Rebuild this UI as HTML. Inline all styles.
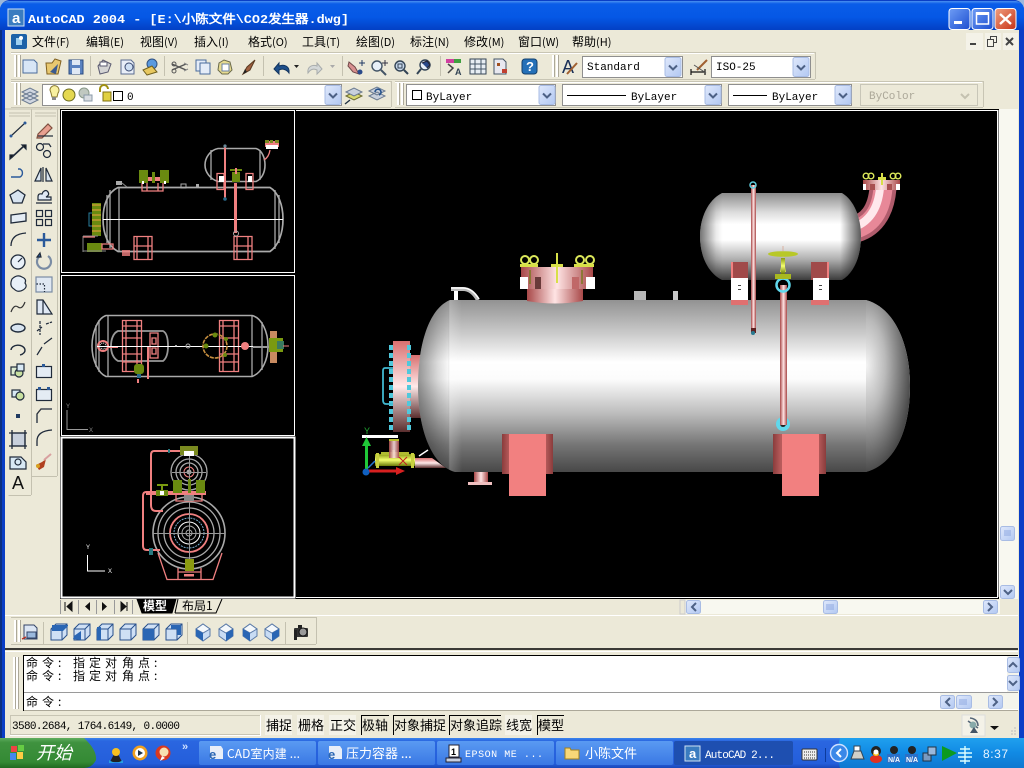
<!DOCTYPE html>
<html><head><meta charset="utf-8"><title>AutoCAD 2004</title>
<style>html,body{margin:0;padding:0;background:#000;overflow:hidden}svg{display:block}
text{font-family:"Liberation Sans","WenQuanYi Zen Hei","Noto Sans CJK SC",sans-serif;font-size:12px;fill:#000}
.m{font-family:"Liberation Mono","WenQuanYi Zen Hei",monospace;font-size:11px}
.c{font-family:"WenQuanYi Zen Hei","Noto Sans CJK SC",sans-serif}
.wf{fill:none;stroke:#aaa;stroke-width:1.300}.pk{fill:none;stroke:#f08080;stroke-width:1.300}
</style></head><body>
<svg width="1024" height="768" viewBox="0 0 1024 768" xmlns="http://www.w3.org/2000/svg">
<defs>
<linearGradient id="tb" x1="0" y1="0" x2="0" y2="1"><stop offset="0" stop-color="#4a90f0"/><stop offset=".1" stop-color="#0a5ce8"/><stop offset=".55" stop-color="#0558e6"/><stop offset="1" stop-color="#0340c4"/></linearGradient>
<linearGradient id="btn" x1="0" y1="0" x2="1" y2="1"><stop offset="0" stop-color="#6f9df5"/><stop offset="1" stop-color="#1c4ed0"/></linearGradient>
<linearGradient id="cls" x1="0" y1="0" x2="1" y2="1"><stop offset="0" stop-color="#f0a080"/><stop offset="1" stop-color="#c83218"/></linearGradient>
<linearGradient id="dd" x1="0" y1="0" x2="1" y2="1"><stop offset="0" stop-color="#dfe8fb"/><stop offset="1" stop-color="#b2c8f2"/></linearGradient>
<linearGradient id="ves" x1="0" y1="0" x2="0" y2="1"><stop offset="0" stop-color="#929292"/><stop offset=".2" stop-color="#cccccc"/><stop offset=".36" stop-color="#fff"/><stop offset=".46" stop-color="#fcfcfc"/><stop offset=".66" stop-color="#bcbcbc"/><stop offset=".84" stop-color="#767676"/><stop offset="1" stop-color="#484848"/></linearGradient>
<linearGradient id="ves2" x1="0" y1="0" x2="0" y2="1"><stop offset="0" stop-color="#8c8c8c"/><stop offset=".22" stop-color="#dcdcdc"/><stop offset=".36" stop-color="#fff"/><stop offset=".54" stop-color="#fff"/><stop offset=".76" stop-color="#b0b0b0"/><stop offset="1" stop-color="#3c3c3c"/></linearGradient>
<linearGradient id="capL" x1="0" y1="0" x2="1" y2="0"><stop offset="0" stop-color="#000" stop-opacity=".42"/><stop offset=".45" stop-color="#000" stop-opacity=".14"/><stop offset=".68" stop-color="#000" stop-opacity=".03"/><stop offset=".72" stop-color="#fff" stop-opacity=".2"/><stop offset="1" stop-color="#fff" stop-opacity="0"/></linearGradient>
<radialGradient id="capR" gradientUnits="userSpaceOnUse" cx="866" cy="365" r="1" gradientTransform="translate(866 365) scale(46 108) translate(-866 -365)"><stop offset="0" stop-color="#f4f4f4"/><stop offset=".42" stop-color="#bababa"/><stop offset=".62" stop-color="#929292"/><stop offset="1" stop-color="#484848"/></radialGradient>
<linearGradient id="capS" x1="0" y1="0" x2="1" y2="0"><stop offset="0" stop-color="#000" stop-opacity=".55"/><stop offset=".1" stop-color="#000" stop-opacity=".08"/><stop offset=".14" stop-color="#000" stop-opacity="0"/><stop offset=".87" stop-color="#000" stop-opacity="0"/><stop offset="1" stop-color="#000" stop-opacity=".65"/></linearGradient>
<linearGradient id="pkH" x1="0" y1="0" x2="1" y2="0"><stop offset="0" stop-color="#a84848"/><stop offset=".5" stop-color="#ffe4e4"/><stop offset="1" stop-color="#a84848"/></linearGradient>
<linearGradient id="pkV" x1="0" y1="0" x2="0" y2="1"><stop offset="0" stop-color="#d87070"/><stop offset=".5" stop-color="#ffeaea"/><stop offset="1" stop-color="#5a2e2e"/></linearGradient>
<linearGradient id="pkD" x1="0" y1="0" x2="1" y2="0"><stop offset="0" stop-color="#8a3c3c"/><stop offset=".15" stop-color="#b85c5c"/><stop offset=".85" stop-color="#b85c5c"/><stop offset="1" stop-color="#8a3c3c"/></linearGradient>
<linearGradient id="yl" x1="0" y1="0" x2="0" y2="1"><stop offset="0" stop-color="#8a9a10"/><stop offset=".5" stop-color="#f4ff70"/><stop offset="1" stop-color="#6a7a08"/></linearGradient>
<linearGradient id="task" x1="0" y1="0" x2="0" y2="1"><stop offset="0" stop-color="#3a84ec"/><stop offset=".1" stop-color="#2a66e0"/><stop offset=".85" stop-color="#245edb"/><stop offset="1" stop-color="#1a48b8"/></linearGradient>
<linearGradient id="start" x1="0" y1="0" x2="0" y2="1"><stop offset="0" stop-color="#5fae5f"/><stop offset=".15" stop-color="#3f923f"/><stop offset=".8" stop-color="#348a34"/><stop offset="1" stop-color="#206a20"/></linearGradient>
<linearGradient id="tray" x1="0" y1="0" x2="0" y2="1"><stop offset="0" stop-color="#20a0ee"/><stop offset=".5" stop-color="#118ae4"/><stop offset="1" stop-color="#0f78d0"/></linearGradient>
<linearGradient id="tk" x1="0" y1="0" x2="0" y2="1"><stop offset="0" stop-color="#5a9af2"/><stop offset="1" stop-color="#3a78e4"/></linearGradient>
<clipPath id="bv"><path d="M450 300H866C895 308 910 345 910 386C910 430 895 464 866 472H455C432 466 418 430 418 386C418 342 430 308 450 300Z"/></clipPath>
<clipPath id="sv"><path d="M722 193H842C854 200 861 218 861 236C861 256 854 273 842 280H722C708 273 700 256 700 236C700 218 708 200 722 193Z"/></clipPath>
<g id="arrow"><rect width="16" height="19" rx="2" fill="url(#dd)" stroke="#a8bce4"/><path d="M4 8l4 4 4-4" fill="none" stroke="#4d6185" stroke-width="2"/></g>
<g id="ring"><circle r="4" fill="none" stroke="#dce85a" stroke-width="2"/></g>
<g id="grip"><rect width="2" height="22" fill="#fff"/><rect x="2" width="1" height="22" fill="#aca899"/><rect x="4" width="2" height="22" fill="#fff"/><rect x="6" width="1" height="22" fill="#aca899"/></g>
<g id="cube"><path d="M-8 -3L-3 -8H8V3L3 8H-8Z" fill="#cfe0f5" stroke="#28508c"/><path d="M-8 -3H3V8M3 -3L8 -8" fill="none" stroke="#28508c"/></g>
<g id="dia"><path d="M0 -8L7 -3V4L0 9L-7 4V-3Z" fill="#c8dcf4" stroke="#5a7aa8"/><path d="M0 -8L7 -3L0 1L-7 -3Z" fill="#f4f8fc" stroke="#5a7aa8"/><path d="M0 1V9L-7 4V-3Z" fill="#2a66b4"/></g>
</defs>

<!-- window frame -->
<rect width="1024" height="768" fill="#0a3ec6"/>
<rect x="0" y="30" width="2" height="708" fill="#0b2f80"/>
<rect x="5" y="30" width="1014" height="708" fill="#ece9d8"/>
<path d="M0 30V8Q1 2 8 1H1016Q1023 2 1024 8V30Z" fill="url(#tb)"/>
<path d="M0 0h9Q2 1 0 8ZM1024 0h-9Q1022 1 1024 8Z" fill="#9cb8dc"/>
<rect x="8" y="9" width="16" height="17" fill="#3a7cc0" stroke="#cfe0f2"/>
<text x="12" y="23" style="font-size:15px;font-weight:bold;fill:#fff">a</text>
<text x="28" y="23" class="m" style="font-size:12px;font-weight:bold;fill:#fff" textLength="321" lengthAdjust="spacingAndGlyphs">AutoCAD 2004 - [E:\小陈文件\CO2发生器.dwg]</text>
<rect x="949" y="8.500" width="21" height="21" rx="3" fill="url(#btn)" stroke="#fff"/><rect x="954" y="21" width="8" height="3" fill="#fff"/>
<rect x="972" y="8.500" width="21" height="21" rx="3" fill="url(#btn)" stroke="#fff"/><rect x="976.500" y="13" width="12" height="11" fill="none" stroke="#fff" stroke-width="1.500"/><rect x="976" y="12" width="13" height="3" fill="#fff"/>
<rect x="995" y="8.500" width="21" height="21" rx="3" fill="url(#cls)" stroke="#fff"/><path d="M1000 14l11 10M1011 14l-11 10" stroke="#fff" stroke-width="2.400"/>

<!-- menu -->
<rect x="5" y="32" width="1014" height="20" fill="#ece9d8"/>
<rect x="11" y="34" width="16" height="15" rx="2" fill="#1c62a8"/><path d="M16 38h6v7h-6z" fill="#9ed0f0"/><circle cx="21" cy="38" r="2" fill="#fff"/>
<g style="font-size:12px">
<text x="32" y="46" class="c">文件<tspan style="font-size:11px">(F)</tspan></text>
<text x="86" y="46" class="c">编辑<tspan style="font-size:11px">(E)</tspan></text>
<text x="140" y="46" class="c">视图<tspan style="font-size:11px">(V)</tspan></text>
<text x="194" y="46" class="c">插入<tspan style="font-size:11px">(I)</tspan></text>
<text x="248" y="46" class="c">格式<tspan style="font-size:11px">(O)</tspan></text>
<text x="302" y="46" class="c">工具<tspan style="font-size:11px">(T)</tspan></text>
<text x="356" y="46" class="c">绘图<tspan style="font-size:11px">(D)</tspan></text>
<text x="410" y="46" class="c">标注<tspan style="font-size:11px">(N)</tspan></text>
<text x="464" y="46" class="c">修改<tspan style="font-size:11px">(M)</tspan></text>
<text x="518" y="46" class="c">窗口<tspan style="font-size:11px">(W)</tspan></text>
<text x="572" y="46" class="c">帮助<tspan style="font-size:11px">(H)</tspan></text>
</g>
<rect x="966" y="33" width="17" height="17" fill="#f4f2e8"/><rect x="985" y="33" width="16" height="17" fill="#f4f2e8"/><rect x="1003" y="33" width="15" height="17" fill="#f4f2e8"/>
<rect x="970" y="43" width="6" height="2" fill="#444"/>
<path d="M987.500 39.500h6v7h-6zM990.500 39.500v-3h6v6h-3" fill="none" stroke="#444"/>
<path d="M1006 38l7 7M1013 38l-7 7" stroke="#444" stroke-width="2"/>

<!-- toolbar 1 -->
<rect x="11" y="52" width="804" height="27" fill="#ece9d8"/>
<path d="M11 52.500H815M815.500 52V79M11 79.500H815" stroke="#c8c5b4" fill="none"/>
<path d="M11 53.500H814" stroke="#fff"/>
<use href="#grip" x="14" y="55"/>
<use href="#grip" x="552" y="55"/>
<path d="M90.500 56v20M164.500 56v20M263.500 56v20M342.500 56v20M440.500 56v20" stroke="#c4c1b0"/>
<!-- file icons -->
<path d="M23 60h11l3 3v10H23z" fill="#d8e6f6" stroke="#4a6c9c"/>
<path d="M46 63h6l3-4 6 2-3 13H47z" fill="#e8c870" stroke="#806020"/><path d="M50 72l8-8-2 10z" fill="#3a5a90"/>
<rect x="69" y="60" width="14" height="14" fill="#5a82c0" stroke="#2c4c80"/><rect x="72" y="60" width="8" height="5" fill="#dfe8f4"/><rect x="72" y="68" width="8" height="6" fill="#dfe8f4"/>
<path d="M98 66l5-6 8 4-3 8-8 2z" fill="#d4d4d4" stroke="#5a5a70"/><path d="M100 62h7v4h-7z" fill="#fff" stroke="#5a5a70"/>
<path d="M121 60h10l3 3v11h-13z" fill="#e8eef8" stroke="#5a6c90"/><circle cx="129" cy="67" r="4" fill="#cfe0f4" stroke="#3a4a70"/>
<circle cx="152" cy="64" r="5" fill="#5a9ae0" stroke="#305080"/><path d="M143 70l9-4 5 6-10 3z" fill="#e8c860" stroke="#706020"/>
<path d="M172 70l14-6M172 64l14 6" stroke="#555" stroke-width="1.400"/><circle cx="174" cy="64" r="2" fill="none" stroke="#555"/><circle cx="174" cy="71" r="2" fill="none" stroke="#555"/><path d="M184 63l4 2M184 71l4-2" stroke="#888"/>
<rect x="196" y="60" width="10" height="11" fill="#e4ecf8" stroke="#4a6c9c"/><rect x="200" y="63" width="10" height="11" fill="#e4ecf8" stroke="#4a6c9c"/>
<path d="M219 63l5-3 6 2 2 8-4 4h-6l-4-4z" fill="#e8dc90" stroke="#6a6a4a"/><path d="M222 64h7v7h-7z" fill="#fff" stroke="#6a80a0"/>
<path d="M243 74l4-7 8-7-5 10z" fill="#a06040" stroke="#5a3a20"/><path d="M243 74l4-2-2-3z" fill="#222"/>
<!-- undo/redo -->
<path d="M274 69l5-6v3c5-2 11 0 10 7-2-3-6-5-10-3v4z" fill="#1e4f8a" stroke="#12345e"/>
<path d="M294 65h5l-2.500 3z" fill="#222"/>
<path d="M322 69l-5-6v3c-5-2-10 1-9 7 2-3 5-5 9-3v4z" fill="#d4d8d8" stroke="#a8acac"/>
<path d="M330 65h5l-2.500 3z" fill="#aaa"/>
<path d="M349 62l6 5 4 7-6-2-5-6z" fill="#d89090" stroke="#704848"/><path d="M362 60v6M359 63h6" stroke="#223a66"/><circle cx="360" cy="72" r="2.500" fill="#2a4a8a"/>
<circle cx="377" cy="66" r="5" fill="#e8f0f8" stroke="#445566" stroke-width="1.400"/><path d="M381 70l5 5" stroke="#445566" stroke-width="2"/><path d="M385 60v6M382 63h6" stroke="#334"/>
<circle cx="400" cy="66" r="5" fill="#c8d8ec" stroke="#345" stroke-width="1.400"/><rect x="398" y="64" width="4" height="4" fill="none" stroke="#345"/><path d="M404 70l4 4" stroke="#345" stroke-width="2"/>
<circle cx="425" cy="65" r="5" fill="#e8f0f8" stroke="#345" stroke-width="1.400"/><path d="M421 69l-4 5" stroke="#345" stroke-width="2"/><path d="M422 63l5-2 3 4-3 3" fill="#2a4a8a" stroke="#223"/>
<rect x="446" y="59" width="8" height="4" fill="#d040a0"/><rect x="454" y="59" width="7" height="4" fill="#40a040"/><path d="M448 64l5 4-5 5" fill="none" stroke="#444" stroke-width="1.500"/><text x="455" y="75" style="font-size:9px;font-weight:bold;fill:#345">A</text>
<rect x="470" y="59" width="16" height="15" fill="#e8eef4" stroke="#345"/><path d="M475 59v15M481 59v15M470 64h16M470 69h16" stroke="#456"/>
<path d="M494 59h9l3 3v12h-12z" fill="#e8e8f0" stroke="#456"/><rect x="497" y="63" width="3" height="3" fill="#a05020"/><rect x="502" y="69" width="5" height="4" fill="#c04030"/>
<rect x="522" y="59" width="15" height="15" rx="3" fill="#2470b8" stroke="#14406c"/><text x="526" y="71" style="font-size:13px;font-weight:bold;fill:#fff">?</text>
<text x="562" y="73" style="font-size:18px;fill:#1a3058">A</text><path d="M567 74l10-11" stroke="#a06030" stroke-width="2"/>
<rect x="582.500" y="56.500" width="100" height="21" fill="#fff" stroke="#8f8f8f"/><text x="587" y="70" class="m">Standard</text><use href="#arrow" x="665" y="57.500"/>
<path d="M691 72h14M691 69v6M705 69v6" stroke="#111" stroke-width="1.200"/><path d="M697 70l10-10" stroke="#a06030" stroke-width="2"/><path d="M694 65l12 8" stroke="#555"/>
<rect x="711.500" y="56.500" width="99" height="21" fill="#fff" stroke="#8f8f8f"/><text x="716" y="70" class="m">ISO-25</text><use href="#arrow" x="793" y="57.500"/>

<!-- toolbar 2 -->
<path d="M11 81.500H391M391.500 81V107M11 107.500H391" stroke="#c8c5b4" fill="none"/><path d="M11 82.500H390" stroke="#fff"/>
<path d="M395 81.500H983M983.500 81V107M395 107.500H983" stroke="#c8c5b4" fill="none"/><path d="M395 82.500H982" stroke="#fff"/>
<use href="#grip" x="14" y="83"/><use href="#grip" x="397" y="83"/>
<path d="M22 96l8-4 8 4-8 4zM22 92l8-4 8 4-8 4zM22 100l8-4 8 4-8 4z" fill="#d0d6e0" stroke="#6a7a90"/>
<rect x="42.500" y="84.500" width="299" height="21" fill="#fff" stroke="#8f8f8f"/>
<path d="M50 90a4.500 4.500 0 1 1 8 3l-1 4h-5l-1-4z" fill="#f8f0a0" stroke="#8a7a30"/><rect x="52" y="97" width="4" height="3" fill="#888"/>
<circle cx="69" cy="95" r="6" fill="#e4d850" stroke="#6a6a20"/>
<circle cx="84" cy="93" r="5" fill="#c0c8c0" stroke="#8a9a8a"/><rect x="84" y="95" width="8" height="6" fill="#d8dce0" stroke="#8a9aa8"/>
<path d="M100 92v-3a4 4 0 0 1 8 0" fill="none" stroke="#a09010" stroke-width="2"/><rect x="103" y="92" width="8" height="9" fill="#e0d040" stroke="#807010"/>
<rect x="113.500" y="91.500" width="9" height="9" fill="#fff" stroke="#000"/>
<text x="127" y="100" class="m">0</text>
<use href="#arrow" x="325" y="85.500"/>
<path d="M346 96l8-4 8 4-8 4z" fill="#d8d870" stroke="#6a6a30"/><path d="M346 92l8-4 8 4-8 4z" fill="#c8d0dc" stroke="#6a7a90"/><path d="M345 104l5-4" stroke="#234" stroke-width="1.400"/>
<path d="M369 96l8-4 8 4-8 4zM369 91l8-4 8 4-8 4z" fill="#c8d0dc" stroke="#6a7a90"/><path d="M375 92a3 3 0 1 1 4 3" fill="none" stroke="#23508a" stroke-width="1.600"/>
<rect x="406.500" y="84.500" width="149" height="21" fill="#fff" stroke="#8f8f8f"/><rect x="412.500" y="90.500" width="9" height="9" fill="#fff" stroke="#000"/><text x="426" y="100" class="m">ByLayer</text><use href="#arrow" x="539" y="85.500"/>
<rect x="562.500" y="84.500" width="159" height="21" fill="#fff" stroke="#8f8f8f"/><path d="M567 95.500H626" stroke="#000"/><text x="631" y="100" class="m">ByLayer</text><use href="#arrow" x="705" y="85.500"/>
<rect x="728.500" y="84.500" width="123" height="21" fill="#fff" stroke="#8f8f8f"/><path d="M733 95.500H767" stroke="#000"/><text x="772" y="100" class="m">ByLayer</text><use href="#arrow" x="835" y="85.500"/>
<rect x="860.500" y="84.500" width="117" height="21" fill="#ece9d8" stroke="#c8c6b8"/><text x="869" y="99" class="m" style="fill:#aca899">ByColor</text><path d="M961 94l4 4 4-4" fill="none" stroke="#c4c1b0" stroke-width="2"/>

<!-- left toolbars -->
<path d="M5 109H60" stroke="#c4c1b0"/>
<path d="M31.500 109V495M8.500 495.500H31" stroke="#c4c1b0" fill="none"/>
<path d="M57.500 109V476M32 476.500H57" stroke="#c4c1b0" fill="none"/>
<path d="M9 113h21M9 116h21M35 113h21M35 116h21" stroke="#c4c1b0"/>
<g fill="none" stroke="#1f2a3a" stroke-width="1.200">
<path d="M11 136L25 123"/><circle cx="11" cy="136" r="1.500" fill="#2b5a9a" stroke="none"/><circle cx="25" cy="123" r="1.500" fill="#2b5a9a" stroke="none"/>
<path d="M11 158L25 145" stroke-width="1.600"/><path d="M22 145h4v4zM10 159v-4h4z" fill="#111"/>
<path d="M11 177h9a4.500 4.500 0 0 0 0-8h-2" stroke="#2b5a9a" stroke-width="1.400"/>
<path d="M18 190l7 5-3 8h-9l-3-8z" fill="#d8e4f0" stroke-width="1.300"/>
<path d="M11 215l15-2v8l-15 2z" fill="#e4ecf4" stroke-width="1.300"/>
<path d="M11 246q0-12 15-13" stroke-width="1.300"/>
<circle cx="18" cy="262" r="7" fill="#e8f0f8" stroke-width="1.300"/><path d="M18 262l4-4"/>
<path d="M12 279q5-5 10-2 5 2 3 6 3 4-2 7-5 3-9-1-5-3-2-10z" fill="#e8f0f8"/>
<path d="M11 312q3-8 7-5t7-5" stroke="#333"/>
<ellipse cx="18" cy="328" rx="7" ry="4" fill="#d8e4f0" stroke-width="1.400"/>
<path d="M11 350a7 5 0 1 1 9 5" stroke-width="1.400"/>
<rect x="11" y="367" width="9" height="8" fill="#dcebd0"/><circle cx="19" cy="373" r="4" fill="#c8e0a0"/><rect x="17" y="364" width="7" height="7" fill="#d8e8f4"/>
<rect x="12" y="390" width="8" height="7" fill="#d8e8f4"/><circle cx="20" cy="396" r="4" fill="#c8e0a0"/>
<rect x="12" y="433" width="13" height="13" fill="#c8d0dc"/><path d="M9 433h18M9 446h18M12 430v19M25 430v19" stroke-width="1.300"/>
<path d="M10 457h11l5 5v7H10z" fill="#d8e8f4" stroke-width="1.200"/><circle cx="18" cy="462" r="3"/>
</g>
<rect x="16" y="414" width="4" height="4" fill="#203a60"/>
<text x="12" y="489" style="font-size:18px;fill:#111">A</text>
<!-- col 2 -->
<g fill="none" stroke="#1f2a3a" stroke-width="1.200">
<path d="M38 134l10-10 4 4-10 10-5 0z" fill="#e8a090" stroke="#805040"/><path d="M38 136h15" />
<circle cx="40" cy="147" r="3.500"/><circle cx="47" cy="154" r="3.500"/><path d="M43 144h6l2 3"/>
<path d="M43 167v15M41 181h-6l6-13zM46 181h6l-6-13z" fill="#d8e4f0"/>
<path d="M36 203h16M38 200v-3q0-4 4-3l1-2q3-3 5 0t-2 5h5v3z" fill="#dfe8f4"/>
<rect x="36.500" y="210.500" width="6" height="6" /><rect x="45.500" y="210.500" width="6" height="6"/><rect x="36.500" y="219.500" width="6" height="6"/><rect x="45.500" y="219.500" width="6" height="6"/>
<path d="M37 240h14M44 233v14" stroke="#2b5a9a" stroke-width="2.400"/>
<path d="M48 256a7 7 0 1 1-8 0" stroke="#7a8ca4" stroke-width="2.200"/><path d="M40 253l1 4-4 0z" fill="#2b5a9a"/>
<rect x="36" y="277" width="16" height="15" fill="#e0e8f2" stroke="#7a8ca4"/><path d="M36.500 284h8v8" stroke-dasharray="1.500 1.500"/>
<path d="M37 300h6l9 14H37z" fill="#dfe8f4"/><path d="M43 300v14"/>
<path d="M37 331l5-4M46 324l6-2M40 321v14" stroke-dasharray="3 1"/>
<path d="M37 355l5-8M44 344l8-6"/>
<rect x="36.500" y="366.500" width="15" height="11" fill="#e4ecf4"/><rect x="42" y="364" width="3" height="3" fill="#2b5a9a" stroke="none"/>
<rect x="36.500" y="389.500" width="15" height="11" fill="#e4ecf4"/><rect x="38" y="387" width="3" height="3" fill="#2b5a9a" stroke="none"/><rect x="47" y="387" width="3" height="3" fill="#2b5a9a" stroke="none"/>
<path d="M37 423v-9l4-5h11" stroke-width="1.300"/><path d="M41 409l-4 5" stroke="#444" stroke-dasharray="1 1"/>
<path d="M37 446v-5q0-10 15-11" stroke-width="1.300"/>
</g>
<path d="M36 465l6-3 4-3-2 8-5 3z" fill="#b04020"/><path d="M44 460l7-6" stroke="#d8a0a0" stroke-width="2"/><circle cx="38" cy="466" r="2" fill="#d8a020"/>

<!-- drawing area -->
<rect x="60" y="109" width="940" height="490" fill="#000"/>
<path d="M61.500 110.500H294.500V272.500H61.500Z" fill="none" stroke="#fff"/>
<path d="M61.500 275.500H294.500V435.500H61.500Z" fill="none" stroke="#fff"/>
<rect x="61.500" y="437.500" width="233" height="160" fill="none" stroke="#fff" stroke-width="2"/>
<path d="M296 110.500H997.500V597.500H296" fill="none" stroke="#fff"/>

<!-- view 1 -->
<g>
<path class="wf" d="M118 187.500H270C278 192 283 205 283 219C283 234 278 246 270 251.500H118C108 246 103 234 103 219C103 205 108 192 118 187.500Z" style="stroke-width:1.700"/>
<path class="wf" d="M119 188V251M275 190V249M107 195V243M110 190V248M279 195V243"/>
<path d="M103 219.500H283" stroke="#fff"/>
<path class="wf" d="M218 148.500H256C262 150 265 158 265 165C265 172 262 179 256 181.500H218C210 179 205 172 205 165C205 158 210 150 218 148.500Z" style="stroke-width:1.600"/>
<path class="wf" d="M211 150V180M260 150V180"/>
<path class="pk" d="M134 236.500h18v23h-18zM137 236v23M148 236v23M134 246h18"/>
<path class="pk" d="M234 236.500h18v23h-18zM237 236v23M248 236v23M234 246h18"/>
<path class="pk" d="M142 180v11h21v-11M147 191v-8M158 191v-8"/>
<rect x="139" y="177" width="28" height="4" fill="#f08080"/>
<rect x="139" y="170" width="9" height="13" fill="#6a8a10"/><rect x="160" y="170" width="9" height="13" fill="#6a8a10"/><rect x="152" y="172" width="3" height="11" fill="#6a8a10"/>
<rect x="142" y="181" width="2" height="3" fill="#fff"/><rect x="164" y="181" width="2" height="3" fill="#fff"/>
<rect x="92" y="203" width="9" height="33" fill="#6a8a10"/><path d="M92 205h9M92 210h9M92 215h9M92 220h9M92 226h9M92 231h9" stroke="#f0a040"/>
<path d="M92 213h-3v13h3" fill="none" stroke="#2a80a0"/>
<rect x="234" y="183" width="3" height="50" fill="#f08080"/><rect x="224" y="146" width="2" height="52" fill="#f08080"/>
<circle cx="225" cy="146" r="1.600" fill="#6a8a9a"/><circle cx="225" cy="199" r="1.800" fill="#2a6a8a"/><circle cx="236" cy="233.500" r="2.500" fill="none" stroke="#aaa"/>
<rect x="232" y="172" width="8" height="10" fill="#6a8a10"/><rect x="230" y="169" width="12" height="2" fill="#6a8a10"/><rect x="235" y="168" width="2" height="6" fill="#f08080"/>
<path class="pk" d="M217 173.500h7v16h-7zM246 173.500h7v16h-7z"/><rect x="219" y="176" width="5" height="6" fill="#fff"/><rect x="248" y="176" width="4" height="6" fill="#fff"/>
<rect x="265" y="141" width="14" height="6" fill="#f08080"/><rect x="266" y="145" width="12" height="4" fill="#fff"/><rect x="265" y="140" width="4" height="3" fill="#7a8a20"/><rect x="270" y="140" width="3" height="3" fill="#7a8a20"/><rect x="275" y="140" width="4" height="3" fill="#7a8a20"/>
<path class="pk" d="M270 150q-1 7-6 10"/>
<rect x="116" y="181" width="6" height="4" fill="#aaa"/><path d="M122 183l5 4" stroke="#888"/><rect x="181" y="184" width="5" height="4" fill="none" stroke="#aaa"/><rect x="196" y="184" width="3" height="4" fill="#aaa"/>
<rect x="87" y="243" width="15" height="9" fill="#6a8a10"/><path d="M83 236h15M83 236v16M83 251h23" stroke="#888" fill="none"/><path class="pk" d="M83 237h12M102 244h11v5h-11z"/>
<rect x="122" y="250" width="8" height="6" fill="#f08080" opacity=".8"/>
</g>

<!-- view 2 -->
<g>
<path class="wf" style="stroke-width:1.600" d="M106 315.500H252C262 318 268 332 268 346C268 360 262 373 252 376.500H106C98 373 92 360 92 346C92 332 98 318 106 315.500Z"/>
<path class="wf" d="M108 316V376M252 316V376M96 325V367M99 320V372M262 322V370"/>
<path class="wf" d="M118 331H163C167 333 168 340 168 346C168 352 167 358 163 361H118C113 358 111 352 111 346C111 340 113 333 118 331Z" style="stroke:#999;stroke-width:1.800"/>
<path class="pk" d="M122.500 320.500h19v51h-19zM126 320v51M137 320v51M122 326h19M122 338h19M122 354h19M122 362h19"/>
<path class="pk" d="M219.500 320.500h19v51h-19zM223 320v51M234 320v51M219 326h19M219 338h19M219 354h19M219 362h19"/>
<path class="pk" d="M150 333h8v25h-8zM152 338h4v6h-4zM152 348h4v6h-4z"/><path d="M148 346v33" stroke="#f08080" stroke-width="2"/>
<circle cx="103" cy="346" r="5" fill="none" stroke="#f08080" stroke-width="2"/><circle cx="103" cy="346" r="3" fill="none" stroke="#fff" stroke-dasharray="1 1"/><path d="M108 347h10" stroke="#f08080" stroke-width="2"/>
<path d="M97 346.500H270" stroke="#fff"/>
<circle cx="188" cy="346" r="2" fill="none" stroke="#aaa"/><circle cx="176" cy="346" r="1" fill="#ddd"/>
<circle cx="215" cy="346" r="12" fill="none" stroke="#c89040" stroke-width="1.600" stroke-dasharray="4 1"/><circle cx="206" cy="346" r="2.500" fill="#6a8a10"/><circle cx="215" cy="335" r="2.500" fill="#6a8a10"/><circle cx="226" cy="339" r="2" fill="#6a8a10"/><circle cx="225" cy="355" r="2" fill="#6a8a10"/>
<circle cx="245" cy="346" r="4" fill="#f08080"/><path d="M253 347h18" stroke="#999" stroke-width="2"/>
<rect x="270" y="331" width="7" height="32" fill="#c88a60"/><rect x="269" y="338" width="14" height="14" fill="#7a9a10"/><rect x="277" y="341" width="7" height="8" fill="#3a7a60"/><path d="M283 346h6" stroke="#f08080"/>
<rect x="134" y="364" width="10" height="10" rx="3" fill="#6a8a10"/><rect x="137" y="374" width="4" height="4" fill="#2a6a8a"/><path d="M138 379v4" stroke="#f08080" stroke-width="2"/>
<path d="M67 410V429.500H88" stroke="#999" fill="none"/><text x="66" y="408" style="font-size:6px;fill:#888">Y</text><text x="89" y="432" style="font-size:6px;fill:#888">X</text>
</g>

<!-- view 3 -->
<g>
<circle cx="189" cy="533" r="36" class="wf" style="stroke-width:1.600"/><circle cx="189" cy="533" r="31" class="wf"/><circle cx="189" cy="533" r="25" class="wf"/>
<circle cx="189" cy="533" r="19" fill="none" stroke="#f08080" stroke-width="1.800"/><circle cx="189" cy="533" r="15" fill="none" stroke="#7ac" stroke-dasharray="2 1"/><circle cx="189" cy="533" r="11" fill="none" stroke="#fff"/><circle cx="189" cy="533" r="7" fill="none" stroke="#aaa"/><circle cx="189" cy="533" r="3" fill="none" stroke="#aaa"/>
<path d="M153 533.500H225M189.500 497V569" stroke="#999"/>
<circle cx="189" cy="472" r="18" class="wf"/><circle cx="189" cy="472" r="13" class="wf"/><circle cx="189" cy="472" r="9" class="wf"/><circle cx="189" cy="472" r="5" fill="none" stroke="#f08080"/><circle cx="189" cy="472" r="2.500" fill="#aaa"/>
<path d="M172 472.500H206M189.500 454V490" stroke="#999"/>
<path class="pk" d="M158 553L167 579.500H213L222 553M178 568v11M201 568v11M178 572h23"/>
<rect x="184" y="574" width="10" height="2.500" fill="#f08080"/>
<rect x="185" y="559" width="9" height="12" fill="#8a9a10"/>
<path d="M187 451H154Q151 451 151 455V505Q151 511 156 511H163" fill="none" stroke="#f08080" stroke-width="2"/>
<path d="M155 492H146Q143 492 143 496V546Q143 550 147 550H160" fill="none" stroke="#f08080" stroke-width="2"/>
<rect x="149" y="548" width="4" height="7" fill="#2a7a80"/><rect x="168" y="449" width="2" height="4" fill="#2a7a80"/>
<rect x="180" y="446" width="18" height="9" fill="#7a8a20"/><rect x="184" y="451" width="10" height="5" fill="#fff"/>
<rect x="146" y="491" width="60" height="4" fill="#f08080"/>
<rect x="173" y="480" width="9" height="13" fill="#6a8a10"/><rect x="196" y="480" width="9" height="13" fill="#6a8a10"/><rect x="188" y="479" width="3" height="14" fill="#6a8a10"/>
<path d="M157 485h11M162 485v7" stroke="#7a9a10" stroke-width="2"/><rect x="156" y="490" width="12" height="6" fill="#6a8a10"/><rect x="160" y="491" width="4" height="4" fill="#fff"/>
<path class="pk" d="M176 495v6h26v-6"/><rect x="184" y="495" width="10" height="6" fill="#888"/>
<path d="M87.500 555V571H105" stroke="#fff" fill="none"/><text x="86" y="549" style="font-size:6px;fill:#fff">Y</text><text x="108" y="573" style="font-size:6px;fill:#fff">X</text>
</g>

<!-- big model -->
<g>
<!-- U pipe -->
<rect x="454" y="289" width="4" height="12" fill="#fff"/>
<path d="M451 289H463Q472 289 478 300" fill="none" stroke="#bbb" stroke-width="4"/><path d="M451 288H463Q472 288 479 299" fill="none" stroke="#fff" stroke-width="1.500"/>
<!-- small top fittings -->
<rect x="634" y="291" width="12" height="9" fill="#b8b8b8"/><rect x="673" y="291" width="5" height="9" fill="#c8c8c8"/>
<!-- left neck + flange -->
<rect x="409" y="355" width="12" height="63" fill="url(#pkV)"/>
<rect x="393" y="341" width="17" height="91" fill="url(#pkV)"/>
<g fill="#50c8dc"><rect x="389" y="345" width="4" height="5"/><rect x="389" y="353" width="4" height="5"/><rect x="389" y="361" width="4" height="5"/><rect x="389" y="369" width="4" height="5"/><rect x="389" y="377" width="4" height="5"/><rect x="389" y="385" width="4" height="5"/><rect x="389" y="393" width="4" height="5"/><rect x="389" y="401" width="4" height="5"/><rect x="389" y="409" width="4" height="5"/><rect x="389" y="417" width="4" height="5"/><rect x="389" y="425" width="4" height="5"/>
<rect x="407" y="345" width="4" height="5"/><rect x="407" y="353" width="4" height="5"/><rect x="407" y="361" width="4" height="5"/><rect x="407" y="369" width="4" height="5"/><rect x="407" y="377" width="4" height="5"/><rect x="407" y="385" width="4" height="5"/><rect x="407" y="393" width="4" height="5"/><rect x="407" y="401" width="4" height="5"/><rect x="407" y="409" width="4" height="5"/><rect x="407" y="417" width="4" height="5"/><rect x="407" y="425" width="4" height="5"/></g>
<path d="M393 368H385Q383 368 383 371V400Q383 404 386 404H393" fill="none" stroke="#40b8d0" stroke-width="1.800"/>
<!-- vessel -->
<g clip-path="url(#bv)">
<rect x="418" y="300" width="492" height="172" fill="url(#ves)"/>
<rect x="418" y="300" width="44" height="172" fill="url(#capL)"/>
<rect x="866" y="300" width="44" height="172" fill="url(#capR)"/>
</g>
<!-- top nozzle -->
<path d="M527 289H583V301Q555 306 527 301Z" fill="url(#pkH)"/>
<rect x="521" y="267" width="72" height="10" fill="url(#pkH)"/>
<rect x="521" y="277" width="72" height="12" fill="url(#pkH)"/>
<rect x="520" y="277" width="8" height="12" fill="#fff"/><rect x="535" y="277" width="6" height="12" fill="#6a3a3a"/><rect x="572" y="277" width="7" height="12" fill="#c06868"/><rect x="586" y="277" width="9" height="12" fill="#fff"/>
<use href="#ring" x="525" y="260"/><use href="#ring" x="534" y="260"/><use href="#ring" x="580" y="260"/><use href="#ring" x="590" y="260"/>
<g fill="#d8e048"><rect x="520" y="264" width="18" height="3"/><rect x="574" y="264" width="20" height="3"/><rect x="551" y="264" width="12" height="3"/><rect x="556" y="253" width="2" height="30"/></g>
<path d="M530 270v14M582 270v14" stroke="#7a7a20" stroke-width="1.500"/>
<!-- saddles -->
<rect x="502" y="434" width="51" height="40" fill="url(#pkD)"/>
<rect x="509" y="434" width="37" height="62" fill="#f28080"/>
<rect x="773" y="434" width="53" height="40" fill="url(#pkD)"/>
<rect x="782" y="434" width="37" height="62" fill="#f28080"/>
<!-- bottom nozzle -->
<rect x="474" y="472" width="14" height="10" fill="url(#pkH)"/><rect x="468" y="482" width="24" height="3" fill="#f0c0c0"/>
<!-- bottom left pipe -->
<path d="M415 458H432L446 468H415Z" fill="url(#pkV)"/>
<path d="M419 456l9-6" stroke="#fff" stroke-width="1.500"/>
<rect x="362" y="435" width="36" height="3" fill="#fff"/>
<rect x="392" y="450" width="3" height="8" fill="#8a9a10"/>
<rect x="375" y="454" width="40" height="12" fill="url(#yl)"/>
<rect x="381" y="452" width="28" height="3" fill="#b0bc30"/>
<rect x="376" y="453" width="3" height="15" fill="#c8d040"/><rect x="411" y="453" width="3" height="15" fill="#c8d040"/>
<rect x="389" y="440" width="10" height="18" fill="url(#pkH)" opacity=".9"/><rect x="389" y="439" width="10" height="2" fill="#b8c030"/>
<!-- UCS -->
<path d="M366.500 470V442" stroke="#20c838" stroke-width="3"/><path d="M362 446l4.500-9 4.500 9z" fill="#20c838"/>
<path d="M367 471H398" stroke="#d82020" stroke-width="3"/><path d="M396 467l9 4-9 4z" fill="#d82020"/>
<path d="M368 468l7-7" stroke="#2878d0" stroke-width="1.500"/><circle cx="366" cy="472" r="3.500" fill="#1060c0"/>
<text x="364" y="434" style="font-size:9px;fill:#20a830">Y</text>
<path d="M399 457l8 8M407 457l-8 8" stroke="#c02020"/>
<!-- elbow (behind the vessel) -->
<path d="M852 230Q880 224 883 188" fill="none" stroke="#b05c6c" stroke-width="27"/>
<path d="M852 230Q880 224 883 188" fill="none" stroke="#e88898" stroke-width="19"/>
<path d="M852 228Q877 220 880 188" fill="none" stroke="#ffe8ec" stroke-width="8"/>
<!-- small vessel -->
<g clip-path="url(#sv)"><rect x="700" y="193" width="161" height="87" fill="url(#ves2)"/><rect x="700" y="193" width="161" height="87" fill="url(#capS)"/></g>
<!-- elbow flange -->
<rect x="863" y="180" width="37" height="10" fill="url(#pkH)"/><rect x="863" y="184" width="3" height="6" fill="#fff"/><rect x="870" y="184" width="5" height="6" fill="#a85050"/><rect x="887" y="184" width="5" height="6" fill="#a85050"/><rect x="896" y="184" width="4" height="6" fill="#fff"/>
<use href="#ring" transform="translate(866 176) scale(.7)"/><use href="#ring" transform="translate(871 176) scale(.7)"/><use href="#ring" transform="translate(893 176) scale(.7)"/><use href="#ring" transform="translate(898 176) scale(.7)"/>
<rect x="881" y="173" width="2" height="12" fill="#d8e048"/><rect x="878" y="177" width="8" height="3" fill="#d8e048"/>
<!-- supports -->
<rect x="731" y="262" width="17" height="18" fill="#a04a4a"/><rect x="731" y="262" width="2" height="43" fill="#f08080"/><rect x="731" y="278" width="17" height="22" fill="#fff"/><rect x="731" y="300" width="17" height="5" fill="#e07070"/><rect x="738" y="285" width="3" height="1" fill="#444"/><rect x="738" y="289" width="3" height="1" fill="#444"/>
<rect x="811" y="262" width="18" height="18" fill="#a04a4a"/><rect x="827" y="262" width="2" height="43" fill="#f08080"/><rect x="813" y="278" width="16" height="22" fill="#fff"/><rect x="811" y="300" width="18" height="5" fill="#e07070"/><rect x="819" y="285" width="3" height="1" fill="#444"/><rect x="819" y="289" width="3" height="1" fill="#444"/>
<!-- thin pipe -->
<rect x="751" y="185" width="5" height="148" fill="url(#pkH)"/><rect x="751" y="328" width="5" height="5" fill="#602020"/>
<circle cx="753" cy="185" r="3" fill="none" stroke="#60d0e0" stroke-width="1.500"/><circle cx="753" cy="333" r="2" fill="#2a7a90"/>
<!-- valve pipe -->
<rect x="780" y="285" width="7" height="142" fill="url(#pkH)"/>
<circle cx="783" cy="285" r="6.500" fill="none" stroke="#60d8ec" stroke-width="2.500"/>
<circle cx="783" cy="424" r="7" fill="#60d8ec"/><circle cx="783" cy="424" r="3" fill="#222"/><rect x="780" y="410" width="7" height="15" fill="url(#pkH)"/>
<ellipse cx="783" cy="254" rx="15" ry="2.800" fill="#b8c828"/>
<path d="M783 256L786 272H780Z" fill="#d8e048"/><rect x="781" y="258" width="4" height="16" fill="url(#yl)"/>
<rect x="775" y="274" width="16" height="5" fill="#a8b820"/><path d="M783 246v5" stroke="#d8b0a0"/>
</g>

<!-- tab bar -->
<rect x="60" y="599" width="77" height="15" fill="#ece9d8"/>
<path d="M60.500 600v14M78.500 600v14M96.500 600v14M114.500 600v14M132.500 600v14" stroke="#999"/>
<path d="M65 602v9M72 602l-5 4.500 5 4.500z" fill="#111" stroke="#111"/><path d="M90 602l-5 4.500 5 4.500z" fill="#111"/><path d="M102 602l5 4.500-5 4.500z" fill="#111"/><path d="M121 602l5 4.500-5 4.500zM127 602v9" fill="#111" stroke="#111"/>
<path d="M137 599l5 14h30l4-14z" fill="#000" stroke="#000"/><text x="143" y="610" class="c" style="fill:#fff;font-weight:bold">模型</text>
<path d="M175 613h41l6-14" fill="none" stroke="#000"/><path d="M175 613l3-14" fill="none" stroke="#000"/><text x="182" y="610" class="c">布局1</text>
<rect x="680" y="600" width="320" height="14" fill="#f8f8f0"/>
<rect x="680" y="600" width="5" height="14" fill="#ece9d8" stroke="#ccc"/>
<rect x="686.500" y="600.500" width="14" height="13" rx="2" fill="url(#dd)" stroke="#a8bce4"/><path d="M696 603l-4 4 4 4" fill="none" stroke="#4d6185" stroke-width="2"/>
<rect x="823.500" y="600.500" width="14" height="13" rx="2" fill="url(#dd)" stroke="#a8bce4"/><path d="M827 604v6M829 604v6M831 604v6M833 604v6" stroke="#8ea8e0"/>
<rect x="983.500" y="600.500" width="14" height="13" rx="2" fill="url(#dd)" stroke="#a8bce4"/><path d="M988 603l4 4-4 4" fill="none" stroke="#4d6185" stroke-width="2"/>
<!-- vertical scrollbar -->
<rect x="999" y="109" width="19" height="490" fill="#f8f8f0"/>
<path d="M999 110V597" stroke="#fff"/>
<rect x="1000.500" y="526.500" width="14" height="14" rx="2" fill="url(#dd)" stroke="#a8bce4"/><path d="M1004 531h7M1004 533h7M1004 535h7" stroke="#8ea8e0"/>
<rect x="1000.500" y="585.500" width="14" height="13" rx="2" fill="url(#dd)" stroke="#a8bce4"/><path d="M1004 590l4 4 4-4" fill="none" stroke="#4d6185" stroke-width="2"/>
<path d="M5 615.500H1018" stroke="#fff"/>

<!-- view toolbar -->
<path d="M11 617.500H316M316.500 617V644M11 644.500H316" fill="none" stroke="#c4c1b0"/>
<use href="#grip" x="14" y="620"/>
<path d="M24 625h10l3 3v11H24z" fill="#dce6f4" stroke="#346"/><rect x="27" y="632" width="9" height="6" fill="#9ab8dc" stroke="#346"/><path d="M22 639l4-2" stroke="#c03020" stroke-width="1.300"/>
<path d="M43.500 622v22M187.500 622v22M285.500 622v22" stroke="#c4c1b0"/>
<g stroke="#28508c"><use href="#cube" x="59" y="632"/><use href="#cube" x="82" y="632"/><use href="#cube" x="105" y="632"/><use href="#cube" x="128" y="632"/></g>
<path d="M52 625h11l5-0v1l-5 5H52z" fill="#2a66b4"/>
<path d="M74 636l7-5v9l-8-1z" fill="#2a66b4"/><path d="M97 627h4v13h-4z" fill="#2a66b4"/><use href="#cube" x="151" y="632"/><use href="#cube" x="174" y="632"/><rect x="143" y="629" width="11" height="11" fill="#2a66b4"/><path d="M171 625h10v10h-4v-6h-6z" fill="#2a66b4"/>
<use href="#dia" x="203" y="632"/><use href="#dia" transform="translate(226 632) scale(-1 1)"/><use href="#dia" x="250" y="632"/><use href="#dia" transform="translate(272 632) scale(-1 1)"/>
<rect x="294" y="628" width="14" height="9" rx="1" fill="#333"/><circle cx="303" cy="632" r="4" fill="#999" stroke="#111"/><rect x="294" y="630" width="3" height="10" fill="#222"/><rect x="298" y="625" width="4" height="3" fill="#222"/>

<!-- command window -->
<path d="M5 649H1018" stroke="#000" stroke-width="1.500"/><path d="M5 651.500H1018" stroke="#fff"/>
<rect x="13" y="657" width="7" height="52" fill="#ece9d8"/><path d="M14 657v52M17 657v52" stroke="#fff" stroke-width="2"/><path d="M15.500 657v52M18.500 657v52" stroke="#aca899"/>
<rect x="23.500" y="655.500" width="995" height="55" fill="#fff"/>
<path d="M23 655.500H1018M23.500 655V711" stroke="#000"/>
<path d="M24 692.500H1018" stroke="#9a9a9a"/><path d="M24 710.500H1018" stroke="#aca899"/>
<text y="667" class="c" x="26 42 58 73 89 105 122 138 154">命令:指定对角点:</text>
<text y="680" class="c" x="26 42 58 73 89 105 122 138 154">命令:指定对角点:</text>
<text y="706" class="c" x="26 42 58">命令:</text>
<rect x="1007" y="656" width="11" height="36" fill="#f4f4ec"/>
<rect x="1007.500" y="657.500" width="12" height="15" rx="2" fill="url(#dd)" stroke="#a8bce4"/><path d="M1009 667l4-4 4 4" fill="none" stroke="#4d6185" stroke-width="2"/>
<rect x="1007.500" y="675.500" width="12" height="15" rx="2" fill="url(#dd)" stroke="#a8bce4"/><path d="M1009 681l4 4 4-4" fill="none" stroke="#4d6185" stroke-width="2"/>
<rect x="940" y="693" width="78" height="16" fill="#f4f4ec"/>
<rect x="940.500" y="695.500" width="14" height="13" rx="2" fill="url(#dd)" stroke="#a8bce4"/><path d="M950 698l-4 4 4 4" fill="none" stroke="#4d6185" stroke-width="2"/>
<rect x="956.500" y="695.500" width="15" height="13" rx="2" fill="url(#dd)" stroke="#a8bce4"/><path d="M960 699v6M962 699v6M964 699v6M966 699v6" stroke="#8ea8e0"/>
<rect x="988.500" y="695.500" width="14" height="13" rx="2" fill="url(#dd)" stroke="#a8bce4"/><path d="M993 698l4 4-4 4" fill="none" stroke="#4d6185" stroke-width="2"/>

<!-- status bar -->
<rect x="6" y="711" width="1012" height="26" fill="#ece9d8"/>
<rect x="10.500" y="715.500" width="250" height="19" fill="#ece9d8" stroke="#c8c5b4"/><path d="M10 735.500H260.500V715" fill="none" stroke="#fff"/>
<text x="12" y="729" class="m" style="font-size:11px" textLength="168">3580.2684, 1764.6149, 0.0000</text>
<g class="c">
<rect x="265" y="715" width="27" height="20" fill="#f4f2e8"/><text x="266" y="730" class="c" style="font-size:13px">捕捉</text>
<rect x="297" y="715" width="27" height="20" fill="#f4f2e8"/><text x="298" y="730" class="c" style="font-size:13px">栅格</text>
<rect x="329" y="715" width="27" height="20" fill="#f4f2e8"/><text x="330" y="730" class="c" style="font-size:13px">正交</text>
<path d="M361.500 735V715.500H389" fill="none" stroke="#000"/><text x="362" y="730" class="c" style="font-size:13px">极轴</text>
<path d="M393.500 735V715.500H445" fill="none" stroke="#000"/><text x="394" y="730" class="c" style="font-size:13px">对象捕捉</text>
<path d="M449.500 735V715.500H501" fill="none" stroke="#000"/><text x="450" y="730" class="c" style="font-size:13px">对象追踪</text>
<rect x="505" y="715" width="27" height="20" fill="#f4f2e8"/><text x="506" y="730" class="c" style="font-size:13px">线宽</text>
<path d="M537.500 735V715.500H564" fill="none" stroke="#000"/><text x="538" y="730" class="c" style="font-size:13px">模型</text>
</g>
<rect x="962" y="715" width="23" height="21" fill="#f4f2e8" stroke="#ddd"/>
<path d="M968 721l10 7M970 718q8 1 8 8" fill="none" stroke="#567" stroke-width="1.600"/><circle cx="973" cy="725" r="3.500" fill="#8aa"/><path d="M970 733h8l-4-6z" fill="#456"/>
<path d="M990 726h9l-4.500 4z" fill="#111"/>
<path d="M1011 734h2M1014 734h2M1014 731h2M1014 728h2M1011 731h2" stroke="#bbb"/>

<!-- taskbar -->
<rect x="0" y="738" width="1024" height="30" fill="url(#task)"/>
<path d="M0 738H84Q97 750 96 760Q92 768 84 768H0Z" fill="url(#start)"/>
<rect x="11" y="746" width="6" height="6" fill="#e44"/><rect x="18" y="745" width="6" height="6" fill="#6c4"/><rect x="10" y="753" width="6" height="7" fill="#48e"/><rect x="17" y="752" width="6" height="7" fill="#fc4"/>
<text x="36" y="759" class="c" style="font-size:18px;fill:#fff;font-style:italic">开始</text>
<!-- quick launch -->
<path d="M110 762l6-12 6 12z" fill="#222"/><circle cx="116" cy="752" r="4" fill="#f8c020"/><path d="M109 760q7 5 14 0v3h-14z" fill="#28a0e0"/>
<circle cx="140" cy="753" r="7.500" fill="#f0a020"/><circle cx="140" cy="753" r="5" fill="#fff"/><path d="M138 750l5 3-5 3z" fill="#234"/>
<circle cx="163" cy="753" r="7.500" fill="#d83820"/><circle cx="164" cy="752" r="4.500" fill="#f8e0b0"/><path d="M162 756l-2 5 5-3z" fill="#fff"/>
<text x="182" y="750" style="font-size:11px;fill:#cfe0ff;font-weight:bold">»</text>
<!-- tasks -->
<rect x="199" y="741" width="117" height="24" rx="2" fill="url(#tk)"/><rect x="318" y="741" width="117" height="24" rx="2" fill="url(#tk)"/><rect x="437" y="741" width="117" height="24" rx="2" fill="url(#tk)"/><rect x="556" y="741" width="117" height="24" rx="2" fill="url(#tk)"/>
<rect x="674" y="741" width="119" height="24" rx="2" fill="#1e4fb0"/>
<path d="M210 746h11l2 3v10h-13z" fill="#e8eef8"/><text x="209" y="759" style="font-size:13px;font-weight:bold;fill:#2a66b4">e</text>
<text x="227" y="758" class="c" style="fill:#fff" textLength="73">CAD室内建 ...</text>
<path d="M329 746h11l2 3v10h-13z" fill="#e8eef8"/><text x="328" y="759" style="font-size:13px;font-weight:bold;fill:#2a66b4">e</text>
<text x="346" y="758" class="c" style="fill:#fff;font-size:13px">压力容器 ...</text>
<rect x="449" y="745" width="10" height="12" fill="#fff" stroke="#223"/><rect x="446" y="758" width="15" height="4" fill="#c8d0e0" stroke="#223"/><text x="451" y="755" style="font-size:9px;font-weight:bold">1</text>
<text x="465" y="757" class="m" style="fill:#fff;font-size:10px" textLength="78">EPSON ME ...</text>
<path d="M565 748h5l1 2h8v9h-14z" fill="#f8d878" stroke="#a08020"/>
<text x="585" y="758" class="c" style="fill:#fff;font-size:13px">小陈文件</text>
<rect x="685" y="746" width="15" height="15" fill="#3a7cc0" stroke="#cfe0f2"/><text x="689" y="758" style="font-size:13px;font-weight:bold;fill:#fff">a</text>
<text x="705" y="758" class="m" style="fill:#fff;font-size:11px" textLength="70">AutoCAD 2...</text>
<rect x="802" y="749" width="15" height="11" rx="1" fill="#eee" stroke="#333"/><path d="M804 752h11M804 755h11M804 758h11" stroke="#333" stroke-dasharray="1 1"/>
<path d="M825.500 748v14" stroke="#0c3a9c"/>
<!-- tray -->
<path d="M840 738H1024V768H840Q836 753 840 738Z" fill="url(#tray)"/>
<circle cx="839" cy="753" r="8.500" fill="#3a88e8" stroke="#cfe0ff" stroke-width="1.400"/><path d="M841 749l-4 4 4 4" fill="none" stroke="#fff" stroke-width="2"/>
<path d="M851 759l3-8h7l3 8z" fill="#d0d0c8" stroke="#345"/><rect x="854" y="746" width="6" height="5" fill="#fff" stroke="#345"/>
<circle cx="876" cy="751" r="5" fill="#222"/><ellipse cx="876" cy="759" rx="6" ry="4" fill="#e03020"/><ellipse cx="876" cy="754" rx="3" ry="2" fill="#f8c020"/><circle cx="876" cy="752" r="2.500" fill="#fff"/>
<circle cx="894" cy="750" r="4" fill="#222"/><rect x="887" y="754" width="13" height="9" fill="#2a70c8"/><text x="888" y="762" style="font-size:7px;fill:#fff;font-weight:bold">N/A</text>
<circle cx="912" cy="750" r="4" fill="#222"/><rect x="905" y="754" width="13" height="9" fill="#2a70c8"/><text x="906" y="762" style="font-size:7px;fill:#fff;font-weight:bold">N/A</text>
<rect x="923" y="753" width="8" height="8" fill="#7a9ac0" stroke="#234"/><rect x="928" y="747" width="8" height="8" fill="#9ab8dc" stroke="#234"/>
<path d="M942 746l15 7-15 8z" fill="#0c9a20"/>
<path d="M960 749h10M958 753h14M958 757h14M960 761h10M965 746v18" fill="none" stroke="#dff" stroke-width="1.400"/>
<text x="983" y="758" style="font-size:12px;fill:#e8f4ff" textLength="25">8:37</text>
</svg>
</body></html>
